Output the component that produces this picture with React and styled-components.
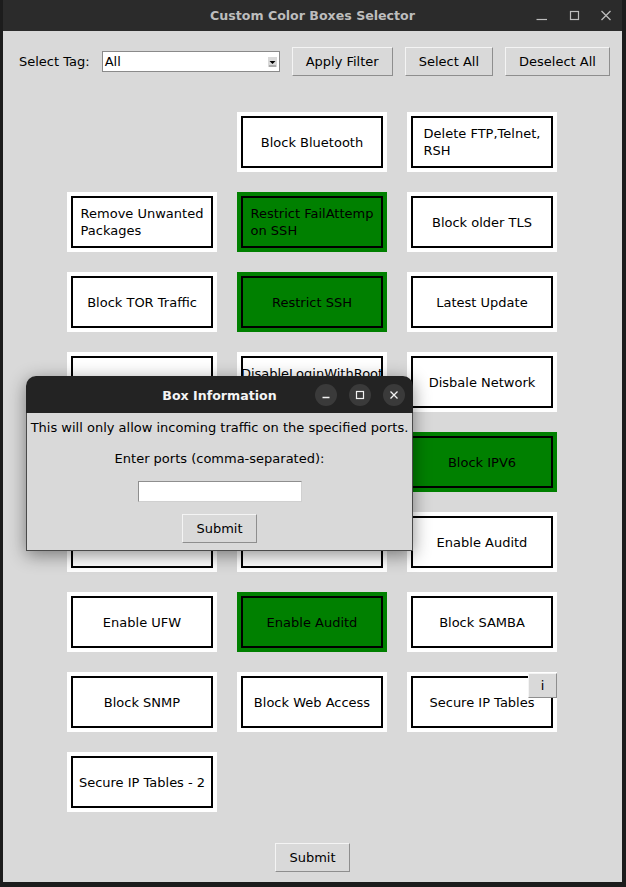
import React from 'react';
import styled, { createGlobalStyle } from 'styled-components';

const GlobalStyle = createGlobalStyle`
  html, body {
    margin: 0;
    padding: 0;
    background: #1c1c1c;
  }
  body {
    font-family: "DejaVu Sans", "Liberation Sans", sans-serif;
    font-size: 13px;
    color: #000;
  }
  * {
    box-sizing: border-box;
  }
`;

const Page = styled.div`
  width: 626px;
  height: 887px;
  padding: 0 4px 5px 3px;
  display: flex;
`;

const Window = styled.div`
  flex: 1;
  display: flex;
  flex-direction: column;
`;

const TitleBar = styled.div`
  height: 31px;
  flex-shrink: 0;
  background: #2b2b2b;
  display: grid;
  grid-template-columns: 1fr auto 1fr;
  align-items: center;
`;

const TitleText = styled.div`
  grid-column: 2;
  font-weight: bold;
  font-size: 12.6px;
  color: ${(p) => p.$color || '#bdbdbd'};
  margin-top: ${(p) => (p.$offset ? `${p.$offset}px` : '0')};
`;

const Controls = styled.div`
  grid-column: 3;
  justify-self: end;
  display: flex;
  align-items: center;
  gap: ${(p) => p.$gap || 0}px;
  padding-right: ${(p) => p.$pad || 0}px;
`;

const PlainControl = styled.div`
  width: 32px;
  height: 26px;
  display: flex;
  align-items: center;
  justify-content: center;
`;

const RoundControl = styled.div`
  width: 22px;
  height: 22px;
  border-radius: 50%;
  background: #3a3a3a;
  display: flex;
  align-items: center;
  justify-content: center;
`;

const Content = styled.div`
  flex: 1;
  position: relative;
  background: #d9d9d9;
  display: flex;
  flex-direction: column;
`;

const Toolbar = styled.div`
  display: flex;
  align-items: center;
  padding: 16px 0 0 16px;
  height: 45px;
`;

const ToolLabel = styled.span`
  margin-right: 12px;
`;

const Combo = styled.div`
  width: 178px;
  height: 21px;
  background: #fff;
  border: 1px solid #8a8a8a;
  display: flex;
  align-items: center;
  justify-content: space-between;
  padding: 0 2px 0 2px;
  margin-right: 12px;
`;

const Button = styled.button`
  height: 29px;
  padding: 0 13px;
  background: #d9d9d9;
  border: 1px solid;
  border-color: #f4f4f4 #8e8e8e #8e8e8e #f4f4f4;
  font-family: inherit;
  font-size: 13px;
  color: #000;
  margin-right: ${(p) => p.$mr || 0}px;
`;

const Grid = styled.div`
  display: grid;
  grid-template-columns: repeat(3, 150px);
  grid-auto-rows: 60px;
  gap: 20px;
  margin: 36px 0 0 64px;
`;

const Box = styled.div`
  position: relative;
  padding: 4px;
  background: ${(p) => (p.$on ? '#008000' : '#ffffff')};
`;

const BoxLabel = styled.div`
  height: 100%;
  border: 2px solid #000;
  display: flex;
  align-items: center;
  justify-content: center;
  overflow: hidden;
  white-space: pre;
  line-height: 17px;
`;

const BoxText = styled.span`
  text-align: left;
`;

const InfoButton = styled.button`
  position: absolute;
  top: 1px;
  right: 0;
  width: 29px;
  height: 25px;
  padding: 0;
  background: #d9d9d9;
  border: 1px solid;
  border-color: #f4f4f4 #8e8e8e #8e8e8e #f4f4f4;
  font-family: inherit;
  font-size: 13px;
`;

const Footer = styled.div`
  display: flex;
  justify-content: center;
  margin-top: 31px;
`;

const Dialog = styled.div`
  position: absolute;
  left: 23px;
  top: 345px;
  width: 387px;
  border-radius: 10px 10px 0 0;
  overflow: hidden;
  box-shadow: 0 4px 18px rgba(0, 0, 0, 0.45);
`;

const DialogTitle = styled(TitleBar)`
  height: 37px;
  background: #232323;
`;

const DialogBody = styled.div`
  background: #d9d9d9;
  border: 1px solid #4a4a4a;
  border-top: none;
  display: flex;
  flex-direction: column;
  align-items: center;
  padding: 7px 0 7px;
  line-height: 16px;
`;

const Prompt = styled.div`
  margin-top: ${(p) => p.$mt || 0}px;
`;

const Entry = styled.div`
  width: 164px;
  height: 21px;
  margin: 14px 0 12px;
  background: #fff;
  border: 1px solid;
  border-color: #8e8e8e #d0d0d0 #d0d0d0 #8e8e8e;
`;

// boxes hidden behind the dialog keep an empty label
const boxes = [
  null,
  { text: 'Block Bluetooth' },
  { text: 'Delete FTP,Telnet,\nRSH' },
  { text: 'Remove Unwanted\nPackages' },
  { text: 'Restrict FailAttemp\non SSH', on: true },
  { text: 'Block older TLS' },
  { text: 'Block TOR Traffic' },
  { text: 'Restrict SSH', on: true },
  { text: 'Latest Update' },
  { text: '' },
  { text: 'DisableLoginWithRoot\n ' },
  { text: 'Disbale Network' },
  { text: '' },
  { text: '' },
  { text: 'Block IPV6', on: true },
  { text: '' },
  { text: '' },
  { text: 'Enable Auditd' },
  { text: 'Enable UFW' },
  { text: 'Enable Auditd', on: true },
  { text: 'Block SAMBA' },
  { text: 'Block SNMP' },
  { text: 'Block Web Access' },
  { text: 'Secure IP Tables', info: true },
  { text: 'Secure IP Tables - 2' },
];

const WinControls = () => (
  <Controls>
    <PlainControl>
      <svg width="12" height="12" viewBox="0 0 12 12">
        <line x1="0.5" y1="9.5" x2="11" y2="9.5" stroke="#bdbdbd" strokeWidth="1.2" />
      </svg>
    </PlainControl>
    <PlainControl>
      <svg width="12" height="12" viewBox="0 0 12 12">
        <rect x="2.5" y="1.5" width="8" height="8" fill="none" stroke="#bdbdbd" strokeWidth="1.2" />
      </svg>
    </PlainControl>
    <PlainControl>
      <svg width="12" height="12" viewBox="0 0 12 12">
        <path d="M1.5 1 L10.5 10 M10.5 1 L1.5 10" stroke="#bdbdbd" strokeWidth="1.3" />
      </svg>
    </PlainControl>
  </Controls>
);

const DialogControls = () => (
  <Controls $gap={12} $pad={8}>
    <RoundControl>
      <svg width="10" height="10" viewBox="0 0 10 10">
        <line x1="1.5" y1="7.5" x2="8.5" y2="7.5" stroke="#f2f2f2" strokeWidth="1.3" />
      </svg>
    </RoundControl>
    <RoundControl>
      <svg width="10" height="10" viewBox="0 0 10 10">
        <rect x="1.5" y="1.5" width="7" height="7" fill="none" stroke="#f2f2f2" strokeWidth="1.2" />
      </svg>
    </RoundControl>
    <RoundControl>
      <svg width="10" height="10" viewBox="0 0 10 10">
        <path d="M1.5 1.5 L8.5 8.5 M8.5 1.5 L1.5 8.5" stroke="#f2f2f2" strokeWidth="1.3" />
      </svg>
    </RoundControl>
  </Controls>
);

export default function App() {
  return (
    <Page>
      <GlobalStyle />
      <Window>
        <TitleBar>
          <TitleText>Custom Color Boxes Selector</TitleText>
          <WinControls />
        </TitleBar>
        <Content>
          <Toolbar>
            <ToolLabel>Select Tag:</ToolLabel>
            <Combo>
              <span>All</span>
              <svg width="9" height="10" viewBox="0 0 9 10">
                <rect x="0" y="0" width="9" height="10" fill="#d9d9d9" />
                <path d="M1.5 4 L7.5 4 L4.5 7 Z" fill="#000" />
                <line x1="1" y1="9" x2="8" y2="9" stroke="#7a7a7a" />
              </svg>
            </Combo>
            <Button $mr={12}>Apply Filter</Button>
            <Button $mr={12}>Select All</Button>
            <Button>Deselect All</Button>
          </Toolbar>

          <Grid>
            {boxes.map((b, i) =>
              b ? (
                <Box key={i} $on={b.on}>
                  <BoxLabel>
                    <BoxText>{b.text}</BoxText>
                  </BoxLabel>
                  {b.info && <InfoButton>i</InfoButton>}
                </Box>
              ) : (
                <div key={i} />
              )
            )}
          </Grid>

          <Footer>
            <Button>Submit</Button>
          </Footer>

          <Dialog>
            <DialogTitle>
              <TitleText $color="#f4f4f4" $offset={1}>Box Information</TitleText>
              <DialogControls />
            </DialogTitle>
            <DialogBody>
              <Prompt>This will only allow incoming traffic on the specified ports.</Prompt>
              <Prompt $mt={15}>Enter ports (comma-separated):</Prompt>
              <Entry />
              <Button>Submit</Button>
            </DialogBody>
          </Dialog>
        </Content>
      </Window>
    </Page>
  );
}
